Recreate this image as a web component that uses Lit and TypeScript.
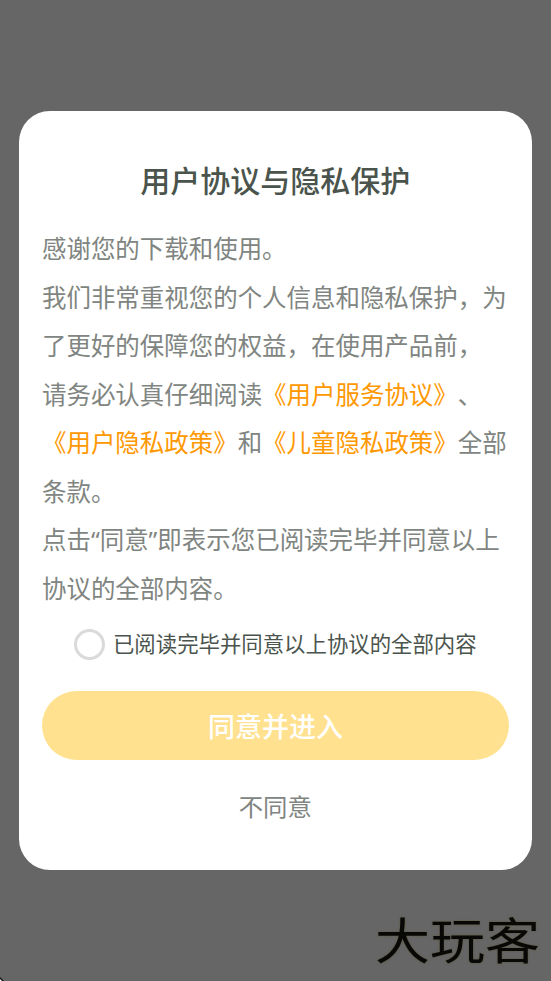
import { LitElement, html, css } from "lit";
import { customElement, state } from "lit/decorators.js";

@customElement("app-root")
export class AppRoot extends LitElement {
  @state() private agreed = false;

  static styles = css`
    :host {
      display: block;
      font-family: "Noto Sans", "Noto Sans CJK SC", sans-serif;
      text-spacing-trim: space-all;
    }
    .screen {
      position: relative;
      box-sizing: border-box;
      height: 981px;
      padding: 111px 19px 0;
      background: #666;
      overflow: hidden;
    }
    .dialog {
      box-sizing: border-box;
      width: 512.6px;
      height: 758.6px;
      padding: 43px 23px 0;
      border-radius: 31px;
      background: #fff;
      display: flex;
      flex-direction: column;
    }
    h1 {
      margin: 0;
      font-size: 30px;
      line-height: 50px;
      font-weight: 500;
      font-family: "Noto Sans CJK SC", sans-serif;
      text-align: center;
      color: #4a544d;
    }
    .body {
      margin-top: 21.4px;
      font-size: 24.46px;
      line-height: 48.5px;
      color: #808581;
      white-space: nowrap;
    }
    .link {
      color: #ff9800;
    }
    .check {
      display: flex;
      align-items: center;
      justify-content: center;
      gap: 8px;
      height: 32px;
      margin-top: 15px;
      font-size: 21.4px;
      line-height: 32px;
      color: #4a544d;
      white-space: nowrap;
    }
    .radio {
      box-sizing: border-box;
      width: 31px;
      height: 31px;
      border: 3px solid #dadada;
      border-radius: 50%;
    }
    .radio.on {
      background: #ff9800;
    }
    .agree {
      display: flex;
      align-items: center;
      justify-content: center;
      width: 467px;
      height: 69px;
      margin-top: 30.6px;
      border-radius: 35px;
      background: #ffe18f;
      color: #fff;
      font-family: "Noto Sans CJK SC", sans-serif;
      font-size: 27px;
      font-weight: 500;
    }
    .decline {
      margin-top: 23.4px;
      text-align: center;
      font-size: 24.4px;
      line-height: 48px;
      color: #808581;
    }
    .brand {
      position: absolute;
      left: 375px;
      top: 902px;
      font-family: "Noto Sans CJK SC", sans-serif;
      font-size: 55px;
      line-height: 72px;
      color: #080806;
      text-shadow: 0 0 2px #5a522f;
      transform: scaleY(0.88);
      white-space: nowrap;
    }
    .corner {
      position: absolute;
      left: 0;
      bottom: 0;
      width: 4px;
      height: 4px;
    }
  `;

  render() {
    return html`
      <div class="screen">
        <div class="dialog">
          <h1>用户协议与隐私保护</h1>
          <div class="body">
            <div>感谢您的下载和使用。</div>
            <div>我们非常重视您的个人信息和隐私保护，为</div>
            <div>了更好的保障您的权益，在使用产品前，</div>
            <div>请务必认真仔细阅读<span class="link">《用户服务协议》</span>、</div>
            <div><span class="link">《用户隐私政策》</span>和<span class="link">《儿童隐私政策》</span>全部</div>
            <div>条款。</div>
            <div>点击“同意”即表示您已阅读完毕并同意以上</div>
            <div>协议的全部内容。</div>
          </div>
          <div class="check" @click=${() => (this.agreed = !this.agreed)}>
            <span class="radio ${this.agreed ? "on" : ""}"></span>
            <span>已阅读完毕并同意以上协议的全部内容</span>
          </div>
          <div class="agree">同意并进入</div>
          <div class="decline">不同意</div>
        </div>
        <div class="brand">大玩客</div>
        <svg class="corner" viewBox="0 0 4 4">
          <path d="M0 0L4 4H0Z" fill="#111" />
          <path d="M0 2L2 4H0Z" fill="#fff" />
        </svg>
      </div>
    `;
  }
}
